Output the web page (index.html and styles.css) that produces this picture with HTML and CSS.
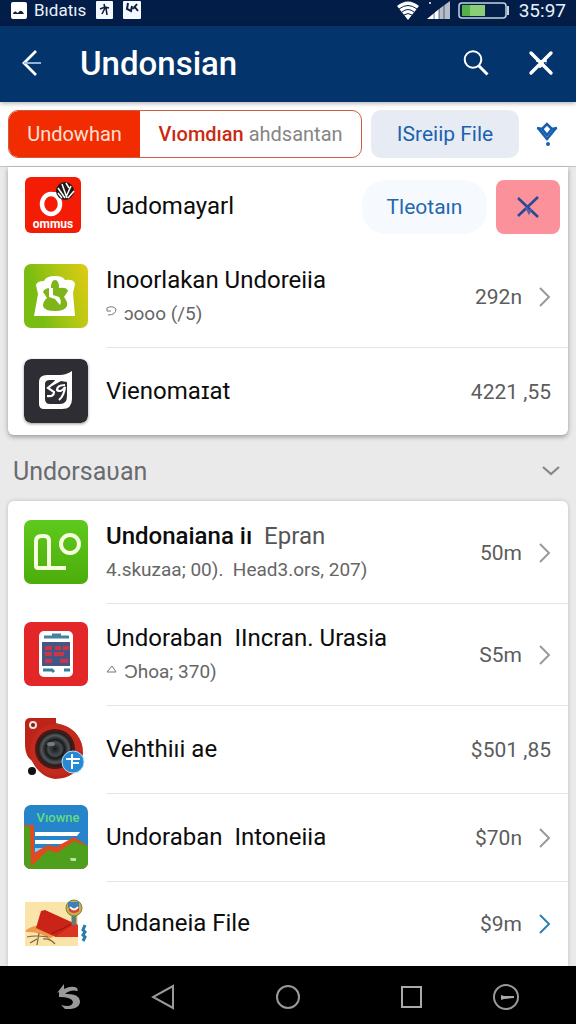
FILE: index.html
```html
<!DOCTYPE html>
<html lang="id">
<head>
  <meta charset="UTF-8">
  <meta name="viewport" content="width=device-width, initial-scale=1">
  <title>Undonsian</title>
  <link rel="stylesheet" href="styles.css">
</head>
<body>
  <div class="status-bar">
    <svg width="16" height="17" viewBox="0 0 16 17"><rect width="16" height="17" rx="2" fill="#fff"/><path d="M2 12c1-3 3-3 4-1l2-1c1-2 3-2 5 2z" fill="#101e3c"/></svg>
    <span>Bıdatıs</span>
    <svg class="status-app" width="17" height="18" viewBox="0 0 17 18"><rect width="17" height="18" rx="1" fill="#f4f8ff"/><path d="M4 8l5-2 4 1M8 3l1 4-3 6M10 7l1 7" stroke="#101e3c" stroke-width="1.6" fill="none"/></svg>
    <svg class="status-app" width="18" height="18" viewBox="0 0 18 18"><rect width="18" height="18" rx="1" fill="#f4f8ff"/><path d="M5 2l-1 6 4 2 1-5M10 8l4-5M11 5l4 5" stroke="#101e3c" stroke-width="2" fill="none"/></svg>
    <div class="status-right">
      <svg width="22" height="19" viewBox="0 0 22 19"><path d="M0 5q11-9 22 0L11 19z" fill="#fff"/><path d="M2 8q9-7 18 0M5 11q6-5 12 0M7 14q4-3 8 0" stroke="#04204a" stroke-width="1" fill="none"/></svg>
      <svg width="23" height="19" viewBox="0 0 23 19"><path d="M0 18L12 8v10z" fill="#fff"/><path d="M12 8L23 0v18H12z" fill="#b5bdc9"/><path d="M7 10v8M12 6v12M17 4v14" stroke="#04204a" stroke-width=".6"/><circle cx="3" cy="2" r="1" fill="#fff"/></svg>
      <svg width="51" height="17" viewBox="0 0 51 17"><rect x="1" y="1" width="47" height="15" rx="3" fill="#04204a" stroke="#c6d3df" stroke-width="1.5"/><rect x="4" y="3" width="23" height="11" fill="#8ace78"/><rect x="4" y="3" width="8" height="11" fill="#55b04a"/><path d="M50 4v9" stroke="#c6d3df" stroke-width="2"/></svg>
      <span class="clock">35:97</span>
    </div>
  </div>

  <header class="app-bar">
    <button class="icon-btn" aria-label="Back">
      <svg width="20" height="26" viewBox="0 0 20 26" fill="none" stroke="#fff"><path d="M14 1L2 13l12 12" stroke-width="2.8"/><path d="M2 13h17" stroke="#9cc3ea" stroke-width="1.8"/></svg>
    </button>
    <h1>Undonsian</h1>
    <button class="icon-btn" aria-label="Search">
      <svg width="26" height="26" viewBox="0 0 26 26" fill="none" stroke="#fff"><circle cx="10" cy="9.5" r="8.3" stroke-width="2"/><path d="M15.5 15.5l9 9" stroke-width="3"/></svg>
    </button>
    <button class="icon-btn" aria-label="Close">
      <svg width="26" height="26" viewBox="0 0 26 26" fill="none" stroke="#fff" stroke-linecap="round"><path d="M3 3l20 20M23 3L3 23" stroke-width="3.4"/><path d="M9 11h9M12 17l3-3" stroke-width="2"/><circle cx="18" cy="13" r="1" fill="#3c78bd" stroke="none"/></svg>
    </button>
  </header>

  <div class="filters">
    <div class="segments">
      <button class="segment active">Undowhan</button>
      <button class="segment"><b>Vıomdıan</b> ahdsantan</button>
    </div>
    <button class="file-btn">ISreiip File</button>
    <button class="icon-btn" aria-label="Filter">
      <svg width="22" height="25" viewBox="0 0 22 25" fill="none" stroke="#165fae" stroke-width="2.6"><path d="M11 2L6 7l5 6 5-6z"/><path d="M1 6l5 1M16 7l5-1M2 6l9 11 9-11"/><circle cx="12" cy="22" r="2" fill="#165fae" stroke="none"/></svg>
    </button>
  </div>

  <main>
    <section class="card card-top">
      <div class="row row-first">
        <svg class="app-icon" viewBox="0 0 64 64">
          <rect x="1" y="3" width="56" height="56" rx="6" fill="#f51c05"/>
          <ellipse cx="27" cy="30" rx="9" ry="10" fill="none" stroke="#fff" stroke-width="4.5"/>
          <path d="M24 20h12" stroke="#fff" stroke-width="4"/>
          <circle cx="41" cy="17" r="9" fill="#201b18"/>
          <path d="M34 14l7 10M38 10l5 14M47 12l-5 11M50 17l-6 7M34 19l4 5M42 9l3 5" stroke="#fff" stroke-width="1.5"/>
          <text x="29" y="54" text-anchor="middle" class="brand">ommus</text>
        </svg>
        <div class="row-body row-actions">
          <h2>Uadomayarl</h2>
          <button class="pill">Tleotaın</button>
          <button class="remove" aria-label="Remove">
            <svg width="24" height="24" viewBox="0 0 24 24" fill="none" stroke="#2a4a95" stroke-width="2.6"><path d="M2 3l20 19M22 2L2 21"/><path d="M10 12l3 6 2-4" stroke="#4f5fac" stroke-width="2"/></svg>
          </button>
        </div>
      </div>

      <div class="row row-tall">
        <svg class="app-icon" viewBox="0 0 64 64">
          <defs><linearGradient id="lime" x1="0" x2="1" y1=".3" y2="0"><stop offset=".1" stop-color="#79bd12"/><stop offset=".55" stop-color="#afc713"/><stop offset="1" stop-color="#e3ca13"/></linearGradient></defs>
          <rect width="64" height="64" rx="7" fill="url(#lime)"/>
          <path d="M12 21q1-4 8-4 2-5 11-5 8 0 10 4 9-1 10 4l-2 9 2 23H10l4-22z" fill="#fff"/>
          <path d="M27 24q0-8 4-8 4 0 4 8 8-1 9 3l-4 6q4 5 3 9-2 5-12 5-11 0-12-5 0-5 4-8l-4-6q1-4 8-4z" fill="#80b51a"/>
          <path d="M25 24h4v7l6 2q3 4 1 8l-5-6-6-2z" fill="#fff"/>
        </svg>
        <div class="row-body plain">
          <div class="info">
            <h2>Inoorlakan Undoreiia</h2>
            <p><svg class="mark" width="11" height="14" viewBox="0 0 11 14"><path d="M1 3q5-3 9 1 0 6-8 6M1 3v3h4" fill="none" stroke="#777"/></svg>ɔooo (/5)</p>
          </div>
          <span class="price">292n</span>
          <svg class="chevron" width="13" height="20" viewBox="0 0 13 20"><path d="M2 1l9 9-9 9"/></svg>
        </div>
      </div>

      <div class="row">
        <svg class="app-icon shadow" viewBox="0 0 64 64">
          <rect width="64" height="64" rx="7" fill="#2d2d33"/>
          <path d="M15 23q0-7 8-7h13q6 0 12-4v28q0 10-10 10H20q-5 0-5-5z" fill="#fff"/>
          <path d="M21 25q0-4 5-4h5l-3 6 9-5 6 1v14q0 8-7 8H26q-5 0-5-5z" fill="#2d2d33"/>
          <path d="M31 23l-7 6 6 4q0 5-7 4M41 26q-8 0-8 5 4 3 8-3-1 9-6 13" fill="none" stroke="#fff" stroke-width="2.2"/>
        </svg>
        <div class="row-body">
          <h2>Vienomaɪat</h2>
          <span class="price">4221 ,55</span>
        </div>
      </div>
    </section>

    <button class="section-head">
      Undorsaʋan
      <svg width="18" height="12" viewBox="0 0 18 12"><path d="M1 2l8 7 8-7" fill="none" stroke="#85878a" stroke-width="2.2"/></svg>
    </button>

    <section class="card card-list">
      <div class="row row-tall">
        <svg class="app-icon" viewBox="0 0 64 64">
          <defs><linearGradient id="green" x2="0" y2="1"><stop stop-color="#5ec91c"/><stop offset="1" stop-color="#4cad0b"/></linearGradient></defs>
          <rect width="64" height="64" rx="7" fill="url(#green)"/>
          <path d="M25 46V21q0-5-5-5h-2q-6 0-6 5v25q0 2 2 2h28" fill="none" stroke="#f5ffdf" stroke-width="4"/>
          <circle cx="46" cy="24" r="9" fill="none" stroke="#f5ffdf" stroke-width="4"/>
        </svg>
        <div class="row-body plain">
          <div class="info">
            <h2><b>Undonaiana iı</b>  <span class="light">Epran</span></h2>
            <p>4.skuzaa; 00).  Head3.ors, 207)</p>
          </div>
          <span class="price">50m</span>
          <svg class="chevron" width="13" height="20" viewBox="0 0 13 20"><path d="M2 1l9 9-9 9"/></svg>
        </div>
      </div>

      <div class="row row-tall">
        <svg class="app-icon" viewBox="0 0 64 64">
          <rect width="64" height="64" rx="7" fill="#e32729"/>
          <rect x="15" y="9" width="34" height="46" rx="5" fill="#fff"/>
          <path d="M20 15h25M28 13h9" stroke="#43839d" stroke-width="3"/>
          <rect x="18" y="20" width="28" height="24" fill="#465684"/>
          <path d="M21 26h7M31 26h6M39 26h6M21 32h7M30 32h10M21 39h7M36 39h8" stroke="#c93648" stroke-width="4"/>
          <path d="M19 48h9l2 2M40 48h6" stroke="#37809c" stroke-width="3" fill="none"/>
        </svg>
        <div class="row-body">
          <div class="info">
            <h2>Undoraban  IIncran. Urasia</h2>
            <p><svg class="mark" width="11" height="14" viewBox="0 0 11 14"><path d="M1 9l5-6 4 6z" fill="none" stroke="#777"/></svg>Ɔhoa; 370)</p>
          </div>
          <span class="price">S5m</span>
          <svg class="chevron" width="13" height="20" viewBox="0 0 13 20"><path d="M2 1l9 9-9 9"/></svg>
        </div>
      </div>

      <div class="row">
        <svg class="app-icon" viewBox="0 0 64 64">
          <defs><radialGradient id="lens"><stop offset="0" stop-color="#17191b"/><stop offset=".4" stop-color="#484b4d"/><stop offset=".55" stop-color="#17191b"/><stop offset=".8" stop-color="#54585a"/><stop offset="1" stop-color="#181414"/></radialGradient></defs>
          <circle cx="8" cy="54" r="4" fill="#111"/>
          <path d="M1 5q1-4 5-4h26v5q27 7 27 30-2 25-28 26-15-2-23-18-7-5-7-16z" fill="#bd2418"/>
          <circle cx="32" cy="33" r="26" fill="#c22a1e"/>
          <circle cx="31" cy="32" r="20" fill="#481918"/>
          <circle cx="31" cy="32" r="17" fill="url(#lens)"/>
          <ellipse cx="27" cy="27" rx="4" ry="2" fill="#777c80"/>
          <circle cx="9" cy="8" r="4" fill="#eee1dc"/><circle cx="9" cy="8" r="2" fill="#6b251e"/>
          <circle cx="49" cy="45" r="11" fill="#2589d6" stroke="#b9dff8" stroke-width="1"/>
          <path d="M42 42h14M48 37v15M48 46h7" stroke="#fff" stroke-width="2"/>
        </svg>
        <div class="row-body">
          <h2>Vehthiıi ae</h2>
          <span class="price">$501 ,85</span>
        </div>
      </div>

      <div class="row">
        <svg class="app-icon" viewBox="0 0 64 64">
          <defs><clipPath id="tile"><rect width="64" height="64" rx="7"/></clipPath></defs>
          <g clip-path="url(#tile)">
            <rect width="64" height="64" fill="#2584ca"/>
            <path d="M11 27h45l-3 4H11zM11 35h36l-5 4H11z" fill="#fff"/>
            <path d="M11 43h22v4H11z" fill="#9bc9ec"/>
            <path d="M0 20h10v28l14-8 8 2 18-10 14 9v23H0z" fill="#df4a20"/>
            <path d="M0 21l6 1 1 40 17-17 9 3 17-12 14 5v23H0z" fill="#4e9f1b"/>
            <path d="M46 53h6v3h-5z" fill="#c2dda5"/>
            <text x="34" y="17" text-anchor="middle" class="poster">Vıowne</text>
          </g>
        </svg>
        <div class="row-body">
          <h2>Undoraban  Intoneiia</h2>
          <span class="price">$70n</span>
          <svg class="chevron" width="13" height="20" viewBox="0 0 13 20"><path d="M2 1l9 9-9 9"/></svg>
        </div>
      </div>

      <div class="row row-last">
        <svg class="app-icon" viewBox="0 0 64 64">
          <rect x="1" y="11" width="53" height="44" fill="#fbe4a9"/>
          <path d="M2 39q9-5 12-4l16 10-5 3q-9-8-23-7z" fill="#ec9a4c"/>
          <path d="M12 37l5-17 4-1 33 15v12H32z" fill="#ca2418"/>
          <path d="M12 37l20 8 18-12 4 1v12H32z" fill="#db3522"/>
          <path d="M27 43l21-10" stroke="#94160e"/>
          <path d="M3 46q8-2 21 0M15 42l-2 12M19 48q7-1 12 5M6 52l7-4" stroke="#7c6437" stroke-width="1.2" fill="none"/>
          <path d="M50 24v10" stroke="#667b78" stroke-width="5"/>
          <circle cx="50" cy="17" r="8" fill="#cbac48" stroke="#748344"/>
          <path d="M45 15h10v5q-5 4-10 0z" fill="#d34431"/><path d="M44 11h11v6H44z" fill="#3d80bc"/><path d="M46 16q4 5 8 0" stroke="#fff" stroke-width="2" fill="none"/>
          <path d="M61 34l-2 5 2 2-2 3 2 2-2 4" stroke="#247cad" stroke-width="3" fill="none"/>
        </svg>
        <div class="row-body">
          <h2>Undaneia File</h2>
          <span class="price">$9m</span>
          <svg class="chevron chevron-blue" width="13" height="20" viewBox="0 0 13 20"><path d="M2 1l9 9-9 9"/></svg>
        </div>
      </div>
    </section>
  </main>

  <nav class="nav-bar">
    <button aria-label="Switch"><svg width="26" height="28" viewBox="0 0 26 28"><path d="M1 10L8 1v5q8-4 13-1l1 3q-8-2-13 3 14-1 15 7 0 9-15 8l-4-4q11 3 12-3-1-5-14-5V9z" fill="#999"/></svg></button>
    <button aria-label="Back"><svg width="24" height="26" viewBox="0 0 24 26"><path d="M22 2v22L2 13z" fill="none" stroke="#999" stroke-width="2"/></svg></button>
    <button aria-label="Home"><svg width="26" height="26" viewBox="0 0 26 26"><circle cx="13" cy="13" r="11" fill="none" stroke="#999" stroke-width="2"/></svg></button>
    <button aria-label="Recent"><svg width="24" height="24" viewBox="0 0 24 24"><rect x="3" y="2" width="19" height="20" fill="none" stroke="#aaa" stroke-width="2"/></svg></button>
    <button aria-label="Hide"><svg width="28" height="28" viewBox="0 0 28 28"><circle cx="14" cy="14" r="12" fill="none" stroke="#999" stroke-width="2"/><path d="M9 12l3 1h10v2l-10 1-3 1z" fill="#aaa"/></svg></button>
  </nav>
</body>
</html>
```

FILE: styles.css
```css
* {
  box-sizing: border-box;
}

body {
  margin: 0;
  min-height: 100vh;
  display: flex;
  flex-direction: column;
  font-family: Roboto, "Liberation Sans", sans-serif;
  background: #eaeaeb;
  color: #0c0c0c;
}

button {
  padding: 0;
  border: none;
  background: none;
  font: inherit;
  color: inherit;
  cursor: pointer;
}

svg {
  display: block;
  flex-shrink: 0;
}

h1, h2, p {
  margin: 0;
}

/* status bar */
.status-bar {
  display: flex;
  align-items: center;
  height: 26px;
  padding: 0 10px 6px 11px;
  background: #021d47;
  color: #e9f1fb;
  font-size: 17px;
}

.status-bar span {
  margin-left: 7px;
}

.status-app {
  margin-left: 10px;
}

.status-right {
  display: flex;
  align-items: center;
  gap: 8px;
  margin-left: auto;
}

.status-bar .clock {
  margin-left: 2px;
  font-size: 19px;
}

/* title bar */
.app-bar {
  position: relative;
  display: flex;
  align-items: center;
  height: 76px;
  padding: 0 22px 2px 20px;
  background: #03346c;
  box-shadow: 0 1px 5px rgba(0, 0, 0, 0.35);
  color: #fff;
}

.icon-btn {
  display: flex;
  align-items: center;
  justify-content: center;
  min-width: 24px;
  height: 48px;
}

.app-bar h1 {
  flex: 1;
  margin-left: 36px;
  font-size: 33px;
  font-weight: 500;
}

.app-bar .icon-btn + .icon-btn {
  margin-left: 39px;
}

/* filters */
.filters {
  display: flex;
  align-items: center;
  height: 65px;
  padding: 0 17px 0 8px;
  background: #fff;
  border-bottom: 1px solid #c4c4c6;
}

.segments {
  display: flex;
  flex: 1;
  height: 48px;
  border: 1px solid #cf5a44;
  border-radius: 10px;
  overflow: hidden;
}

.segment {
  flex: 1;
  font-size: 20px;
  color: #858585;
  white-space: nowrap;
}

.segment b {
  color: #cb2a12;
  font-weight: 500;
}

.segment.active {
  flex: 0 0 131px;
  background: #f12c00;
  color: #ffe0d2;
}

.file-btn {
  width: 148px;
  height: 48px;
  margin: 0 16px 0 9px;
  border-radius: 10px;
  background: #e7ebf4;
  color: #1a62ae;
  font-size: 21px;
}

/* lists */
main {
  flex: 1;
  display: flex;
  flex-direction: column;
}

.card {
  margin: 0 8px;
  background: #fff;
  border-radius: 6px;
  box-shadow: 0 2px 5px rgba(0, 0, 0, 0.35);
}

.card-top {
  border-radius: 0 0 6px 6px;
}

.card-list {
  flex: 1;
  border-radius: 6px 6px 0 0;
  box-shadow: 0 0 4px rgba(0, 0, 0, 0.2);
}

.row {
  display: flex;
  align-items: center;
  gap: 18px;
  min-height: 88px;
  padding-left: 16px;
}

.row-first {
  min-height: 78px;
}

.row-tall {
  min-height: 102px;
}

.row-last {
  min-height: 84px;
}

.row-body {
  display: flex;
  flex: 1;
  align-items: center;
  align-self: stretch;
  padding-right: 17px;
  border-top: 1px solid #e6e6e8;
}

.row-actions,
.plain {
  border-top-color: transparent;
}

.row-actions {
  gap: 9px;
  padding-right: 8px;
}

.app-icon {
  width: 64px;
  height: 64px;
}

.shadow {
  border-radius: 7px;
  box-shadow: 0 1px 3px rgba(0, 0, 0, 0.4);
}

.brand {
  font-size: 12px;
  font-weight: 700;
  fill: #fff;
}

.poster {
  font-size: 13px;
  font-weight: 500;
  fill: #61dc7e;
}

.info {
  flex: 1;
}

h2 {
  flex: 1;
  font-size: 24px;
  line-height: 33px;
  font-weight: 400;
  white-space: pre-wrap;
}

h2 b {
  font-weight: 500;
}

.light {
  color: #555;
}

.info p {
  display: flex;
  font-size: 19px;
  line-height: 33px;
  color: #666;
  white-space: pre-wrap;
}

.mark {
  margin: 8px 7px 0 0;
}

.price {
  font-size: 21px;
  color: #5c5c5c;
}

.chevron {
  margin-left: 16px;
  fill: none;
  stroke: #9a9a9c;
  stroke-width: 2;
}

.chevron-blue {
  stroke: #2d80b4;
}

.pill {
  width: 125px;
  height: 54px;
  border-radius: 24px;
  background: #f6f9fe;
  color: #2468ae;
  font-size: 21px;
}

.remove {
  display: flex;
  align-items: center;
  justify-content: center;
  width: 64px;
  height: 54px;
  border-radius: 8px;
  background: #fb929b;
}

.section-head {
  display: flex;
  align-items: center;
  justify-content: space-between;
  height: 66px;
  padding: 6px 16px 0 13px;
  font-size: 25px;
  color: #696b6e;
}

/* system navigation */
.nav-bar {
  display: grid;
  grid-template-columns: 94fr 94fr 156fr 90fr 100fr;
  height: 58px;
  padding: 4px 20px 0 22px;
  background: #000;
}

.nav-bar button {
  display: flex;
  align-items: center;
  justify-content: center;
}
```
